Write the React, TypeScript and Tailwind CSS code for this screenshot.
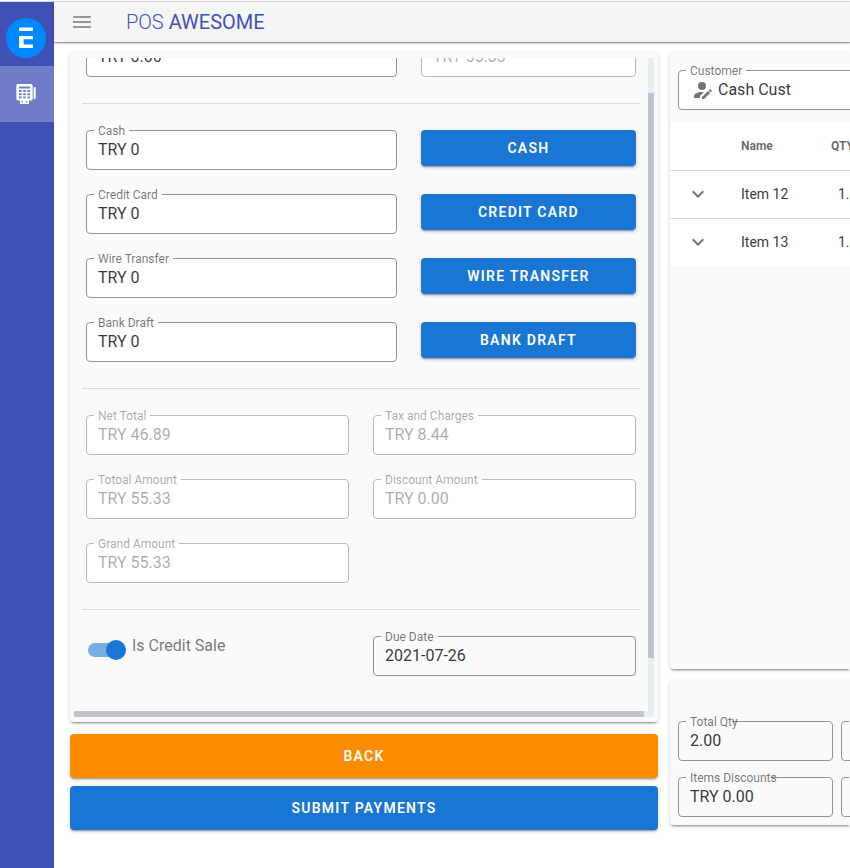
import React, { useId, useState } from "react";

const ACCOUNT_EDIT =
  "M21.7,13.35L20.7,14.35L18.65,12.3L19.65,11.3C19.86,11.09 20.21,11.09 20.42,11.3L21.7,12.58C21.91,12.79 21.91,13.14 21.7,13.35M12,18.94L18.06,12.88L20.11,14.93L14.06,21H12V18.94M12,14C7.58,14 4,15.79 4,18V20H10V18.11L14,14.11C13.34,14.03 12.67,14 12,14M12,4A4,4 0 0,0 8,8A4,4 0 0,0 12,12A4,4 0 0,0 16,8A4,4 0 0,0 12,4Z";
const CHEVRON_DOWN =
  "M7.41,8.58L12,13.17L16.59,8.58L18,10L12,16L6,10L7.41,8.58Z";
const MENU = "M3,6H21V8H3V6M3,11H21V13H3V11M3,16H21V18H3V16Z";

const cardShadow =
  "shadow-[0_3px_1px_-2px_rgba(0,0,0,0.2),0_2px_2px_0_rgba(0,0,0,0.14),0_1px_5px_0_rgba(0,0,0,0.12)]";

function Icon({ path, className = "" }: { path: string; className?: string }) {
  return (
    <svg viewBox="0 0 24 24" className={`size-6 shrink-0 fill-current ${className}`} aria-hidden="true">
      <path d={path} />
    </svg>
  );
}

function Logo() {
  return (
    <svg viewBox="0 0 40 40" className="size-10" aria-hidden="true">
      <circle cx="20" cy="20" r="20" fill="#0089ff" />
      <path d="M13 9.5H27V13H13Z M13 18H27V21.3H17.6V26.4H27V30H13Z" fill="#fff" />
    </svg>
  );
}

function PosIcon() {
  return (
    <svg viewBox="0 0 20 20" className="size-5" aria-hidden="true">
      <path
        fill="#fff"
        fillRule="evenodd"
        d="M2 0H15Q16.7 0 16.7 2V14.5Q16.7 16.5 15 16.5H13V20H4V16.5H2Q.3 16.5 .3 14.5V2Q.3 0 2 0ZM3 2.5V4.5H14V2.5ZM3 6V8H5.6V6ZM7.2 6V8H9.8V6ZM11.4 6V8H14V6ZM3 9.3V11.2H5.6V9.3ZM7.2 9.3V11.2H9.8V9.3ZM11.4 9.3V11.2H14V9.3ZM3 12.5V14.2H5.6V12.5ZM7.2 12.5V14.2H9.8V12.5ZM11.4 12.5V14.2H14V12.5ZM5.8 17V18.4H7V17ZM10 17V18.4H11.2V17Z"
      />
      <path fill="#fff" d="M17.7 3H18.6Q19.7 3 19.7 4V14Q19.7 15 18.6 15H17.7Z" />
    </svg>
  );
}

type FieldProps = {
  label: string;
  value: string;
  disabled?: boolean;
  plain?: boolean;
  tightNotch?: boolean;
  icon?: string;
  className?: string;
};

function Field({ label, value, disabled, plain, tightNotch, icon, className = "" }: FieldProps) {
  const id = useId();
  const [text, setText] = useState(value);
  return (
    <fieldset
      className={`-mt-[7px] min-w-0 rounded border ${disabled ? "border-[#b8b8b8]" : "border-[#949494]"} ${plain ? "" : "bg-white"} ${className}`}
    >
      <legend className="ml-[7px] h-[15px] px-1 text-xs leading-[17px]">
        <label
          htmlFor={id}
          className={`block whitespace-nowrap ${tightNotch ? "-mr-[10px]" : ""} ${disabled ? "text-black/35" : "text-black/55"}`}
        >
          {label}
        </label>
      </legend>
      <div className={`mb-2 flex h-[23px] items-center ${icon ? "pl-[11px]" : "pl-[11px]"}`}>
        {icon && <Icon path={icon} className="mr-1 text-black/55" />}
        <input
          id={id}
          type="text"
          value={text}
          disabled={disabled}
          onChange={(e) => setText(e.target.value)}
          className={`w-full min-w-0 bg-transparent text-base leading-5 outline-none ${disabled ? "text-black/35" : "text-black/80"}`}
        />
      </div>
    </fieldset>
  );
}

function Button({ children, className = "" }: { children: React.ReactNode; className?: string }) {
  return (
    <button
      type="button"
      className={`rounded text-sm font-semibold tracking-[0.09em] text-white uppercase ${cardShadow} ${className}`}
    >
      {children}
    </button>
  );
}

function Divider() {
  return <hr className="-mx-1 my-[26px] border-t border-[#dcdcdc]" />;
}

const methods = ["Cash", "Credit Card", "Wire Transfer", "Bank Draft"];

const totals = [
  { label: "Net Total", value: "TRY 46.89" },
  { label: "Tax and Charges", value: "TRY 8.44" },
  { label: "Totoal Amount", value: "TRY 55.33" },
  { label: "Discount Amount", value: "TRY 0.00" },
  { label: "Grand Amount", value: "TRY 55.33" },
];

const items = [
  { name: "Item 12", qty: "1.00" },
  { name: "Item 13", qty: "1.00" },
];

function PaymentCard() {
  return (
    <section className={`grid grid-cols-[minmax(0,1fr)_6px] rounded bg-[#fafafa] px-1 py-[5px] ${cardShadow}`}>
      <div className="overflow-hidden pr-3 pl-3">
        <div className="-mt-[21px] pb-[35px]">
          <div className="grid grid-cols-12 items-start gap-x-6">
            <Field className="col-span-7" label="Paid Amount" value="TRY 0.00" />
            <Field className="col-span-5" label="To Be Paid" value="TRY 55.33" disabled />
          </div>
          <Divider />
          <div className="grid grid-cols-12 items-start gap-6">
            {methods.map((m) => (
              <React.Fragment key={m}>
                <Field className="col-span-7" label={m} value="TRY 0" />
                <Button className="col-span-5 h-9 bg-[#1976d2]">{m}</Button>
              </React.Fragment>
            ))}
          </div>
          <Divider />
          <div className="grid grid-cols-2 items-start gap-6">
            {totals.map((t) => (
              <Field key={t.label} label={t.label} value={t.value} disabled />
            ))}
          </div>
          <Divider />
          <div className="grid grid-cols-2 items-start gap-6">
            <label className="flex items-start text-base leading-5 text-black/55">
              <input
                type="checkbox"
                role="switch"
                defaultChecked
                className="relative mt-[7px] mr-2 ml-[2px] h-[14px] w-9 appearance-none rounded-full bg-[#75ade4] before:absolute before:-top-[3px] before:-right-[2px] before:size-5 before:rounded-full before:bg-[#1976d2]"
              />
              Is Credit Sale
            </label>
            <Field label="Due Date" value="2021-07-26" plain />
          </div>
        </div>
      </div>
      <div className="bg-[#e9eef1] pt-[35px] pb-[53px]">
        <div className="h-full bg-[#c0c4cc]" />
      </div>
      <div className="h-[6px] bg-[#e9eef1] pr-1">
        <div className="h-full bg-[#c0c4cc]" />
      </div>
      <div className="bg-[#e9eef1]" />
    </section>
  );
}

function CartCard() {
  return (
    <section className={`h-[616px] overflow-hidden rounded-l bg-[#fafafa] ${cardShadow}`}>
      <div className="w-[360px] pt-[17px]">
        <div className="px-2">
          <Field label="Customer" value="Cash Cust" icon={ACCOUNT_EDIT} />
        </div>
        <table className="mt-3 w-full table-fixed border-collapse rounded bg-white text-left">
          <thead>
            <tr className="h-12 border-b border-[#dcdcdc] text-xs text-black/60">
              <th className="w-[55px]" />
              <th className="w-[90px] pl-4 font-bold">Name</th>
              <th className="pl-4 font-bold">QTY</th>
            </tr>
          </thead>
          <tbody>
            {items.map((it) => (
              <tr key={it.name} className="h-12 border-b border-[#dcdcdc] text-sm text-black/80 last:border-b-0">
                <td className="pl-4">
                  <button type="button" aria-label={`Expand ${it.name}`} className="block text-black/55">
                    <Icon path={CHEVRON_DOWN} />
                  </button>
                </td>
                <td className="pl-4">{it.name}</td>
                <td className="pl-[23px]">{it.qty}</td>
              </tr>
            ))}
          </tbody>
        </table>
      </div>
    </section>
  );
}

function SummaryCard() {
  return (
    <section className={`overflow-hidden rounded-l bg-[#fafafa] ${cardShadow}`}>
      <div className="grid w-[334px] grid-cols-2 gap-x-2 gap-y-4 px-2 pt-10 pb-2">
        <Field label="Total Qty" value="2.00" plain tightNotch />
        <Field label="Total" value="" plain />
        <Field label="Items Discounts" value="TRY 0.00" plain tightNotch />
        <Field label="Total" value="" plain />
      </div>
    </section>
  );
}

export default function App() {
  return (
    <div className="flex min-h-screen flex-col overflow-hidden bg-white font-[Roboto,sans-serif]">
      <div className="h-[2px] border-b border-[#dadada]" />
      <div className="flex flex-1">
        <nav className="w-[54px] shrink-0 bg-[#3f51b5]">
          <a href="#home" aria-label="Home" className="flex h-16 items-center justify-center pt-2 pr-[2px]">
            <Logo />
          </a>
          <a href="#pos" aria-label="POS" className="flex h-14 items-center justify-center bg-[#6f7cc7] pr-[2px]">
            <PosIcon />
          </a>
        </nav>
        <div className="flex min-w-0 flex-1 flex-col">
          <header className="flex h-10 items-center bg-[#f5f5f5] pl-4 shadow-[0_1px_1px_0_rgba(0,0,0,0.35),0_1px_5px_0_rgba(0,0,0,0.15)]">
            <button type="button" aria-label="Menu" className="text-[#979797]">
              <Icon path={MENU} />
            </button>
            <h1 className="ml-8 flex gap-[5px] text-xl text-[#3f51b5]">
              <span className="font-light">POS</span>
              <span>AWESOME</span>
            </h1>
          </header>
          <main className="flex gap-3 pt-[11px] pl-4">
            <div className="flex min-w-0 flex-1 flex-col">
              <PaymentCard />
              <Button className="mt-3 h-11 bg-[#fb8c00]">Back</Button>
              <Button className="mt-2 h-11 bg-[#1976d2]">Submit Payments</Button>
            </div>
            <div className="flex w-[180px] shrink-0 flex-col gap-3">
              <CartCard />
              <SummaryCard />
            </div>
          </main>
        </div>
      </div>
    </div>
  );
}
